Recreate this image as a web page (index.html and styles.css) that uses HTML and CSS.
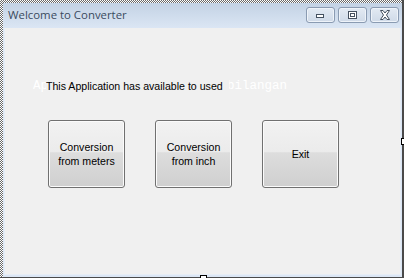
FILE: index.html
```html
<!DOCTYPE html>
<html>
<head>
  <meta charset="utf-8">
  <title>Welcome to Converter</title>
  <link rel="stylesheet" href="styles.css">
</head>
<body>
  <div class="stage">
    <div class="window">
      <div class="titlebar">
        <span class="title">Welcome to Converter</span>
        <div class="caption-buttons">
          <span class="cap-btn">
            <svg width="11" height="8" viewBox="0 0 11 8"><rect x="1.5" y="3.5" width="7" height="3" fill="#fff" stroke="#44505f"/></svg>
          </span>
          <span class="cap-btn">
            <svg width="11" height="10" viewBox="0 0 11 10"><rect x="1.5" y="1.5" width="8" height="7" fill="#fff" stroke="#44505f"/><rect x="3.5" y="3.5" width="4" height="3" fill="none" stroke="#44505f"/></svg>
          </span>
          <span class="cap-btn">
            <svg width="12" height="10" viewBox="0 0 12 10"><path d="M1.5 0.5 H4 L6 3 L8 0.5 H10.5 L7.5 5 L10.5 9.5 H8 L6 7 L4 9.5 H1.5 L4.5 5 Z" fill="#fff" stroke="#44505f"/></svg>
          </span>
        </div>
      </div>
      <div class="client">
        <div class="label-row">
          <span class="label-hidden hidden-start">Ap</span>
          <span class="label">This Application has available to used</span>
          <span class="label-hidden hidden-end">bilangan</span>
        </div>
        <div class="buttons">
          <button class="btn">Conversion<br>from meters</button>
          <button class="btn">Conversion<br>from inch</button>
          <button class="btn">Exit</button>
        </div>
      </div>
    </div>
    <span class="grip grip-bottom"></span>
    <span class="grip grip-right"></span>
  </div>
</body>
</html>
```

FILE: styles.css
```css
body {
  margin: 0;
  background-color: #4a4a4a;
  font-family: "Liberation Sans", Arial, sans-serif;
}

.stage {
  position: relative;
  width: 404px;
  height: 278px;
  overflow: hidden;
  padding: 3px 0 0 3px;
  box-sizing: border-box;
  background:
    linear-gradient(#4a4a4a, #4a4a4a) right top / 2px 100% no-repeat,
    linear-gradient(#4a4a4a, #4a4a4a) left bottom / 100% 1px no-repeat,
    conic-gradient(#6a6a6a 25%, #fff 0 50%, #6a6a6a 0 75%, #fff 0) 0 0 / 2px 2px;
}

.window {
  display: flex;
  flex-direction: column;
  width: 399px;
  height: 274px;
  padding: 0 1px 2px 1px;
  box-sizing: border-box;
  background-color: #dbe6f4;
}

.titlebar {
  display: flex;
  justify-content: space-between;
  height: 25px;
  padding: 4px 3px 0 5px;
  box-sizing: border-box;
  margin: 0 -1px;
  background: linear-gradient(#c3d2e4, #dbe6f4);
}

.title {
  font-family: "Open Sans", "Noto Sans", sans-serif;
  font-size: 11.4px;
  line-height: 16px;
  color: #3a4a5e;
}

.caption-buttons {
  display: flex;
  gap: 3px;
}

.cap-btn {
  display: flex;
  align-items: center;
  justify-content: center;
  width: 29px;
  height: 16px;
  box-sizing: border-box;
  border: 1px solid #8a9bb2;
  border-radius: 3px;
  background: linear-gradient(#e3eaf3, #cfdae8);
  box-shadow: inset 0 0 0 1px #eef3f9;
}

.client {
  flex: 1;
  background-color: #f0f0f0;
  border: 1px solid #e6edf6;
  border-top: none;
}

.label-row {
  display: flex;
  margin-top: 50px;
  padding-left: 28px;
  line-height: 16px;
  white-space: nowrap;
}

.label-hidden {
  overflow: hidden;
  font-family: "Liberation Mono", monospace;
  font-size: 12.5px;
  color: #fff;
}

.hidden-start {
  width: 13px;
}

.hidden-end {
  text-indent: -2px;
}

.label {
  width: 183px;
  font-size: 10.6px;
  color: #000;
}

.buttons {
  display: flex;
  gap: 30px;
  margin-top: 26px;
  padding-left: 43px;
}

.btn {
  display: flex;
  align-items: center;
  justify-content: center;
  width: 77px;
  height: 68px;
  padding: 0;
  border: 1px solid #707070;
  border-radius: 3px;
  background: linear-gradient(#f2f2f2 0%, #ebebeb 47%, #dddddd 48%, #cfcfcf 100%);
  box-shadow: inset 0 0 0 1px #fbfbfb;
  font-family: "Liberation Sans", Arial, sans-serif;
  font-size: 10.6px;
  line-height: 14px;
  color: #000;
  text-align: center;
}

.grip {
  position: absolute;
  width: 5px;
  height: 5px;
  border: 1px solid #000;
  background-color: #fff;
}

.grip-bottom {
  left: 200px;
  top: 275px;
}

.grip-right {
  left: 401px;
  top: 138px;
}
```
